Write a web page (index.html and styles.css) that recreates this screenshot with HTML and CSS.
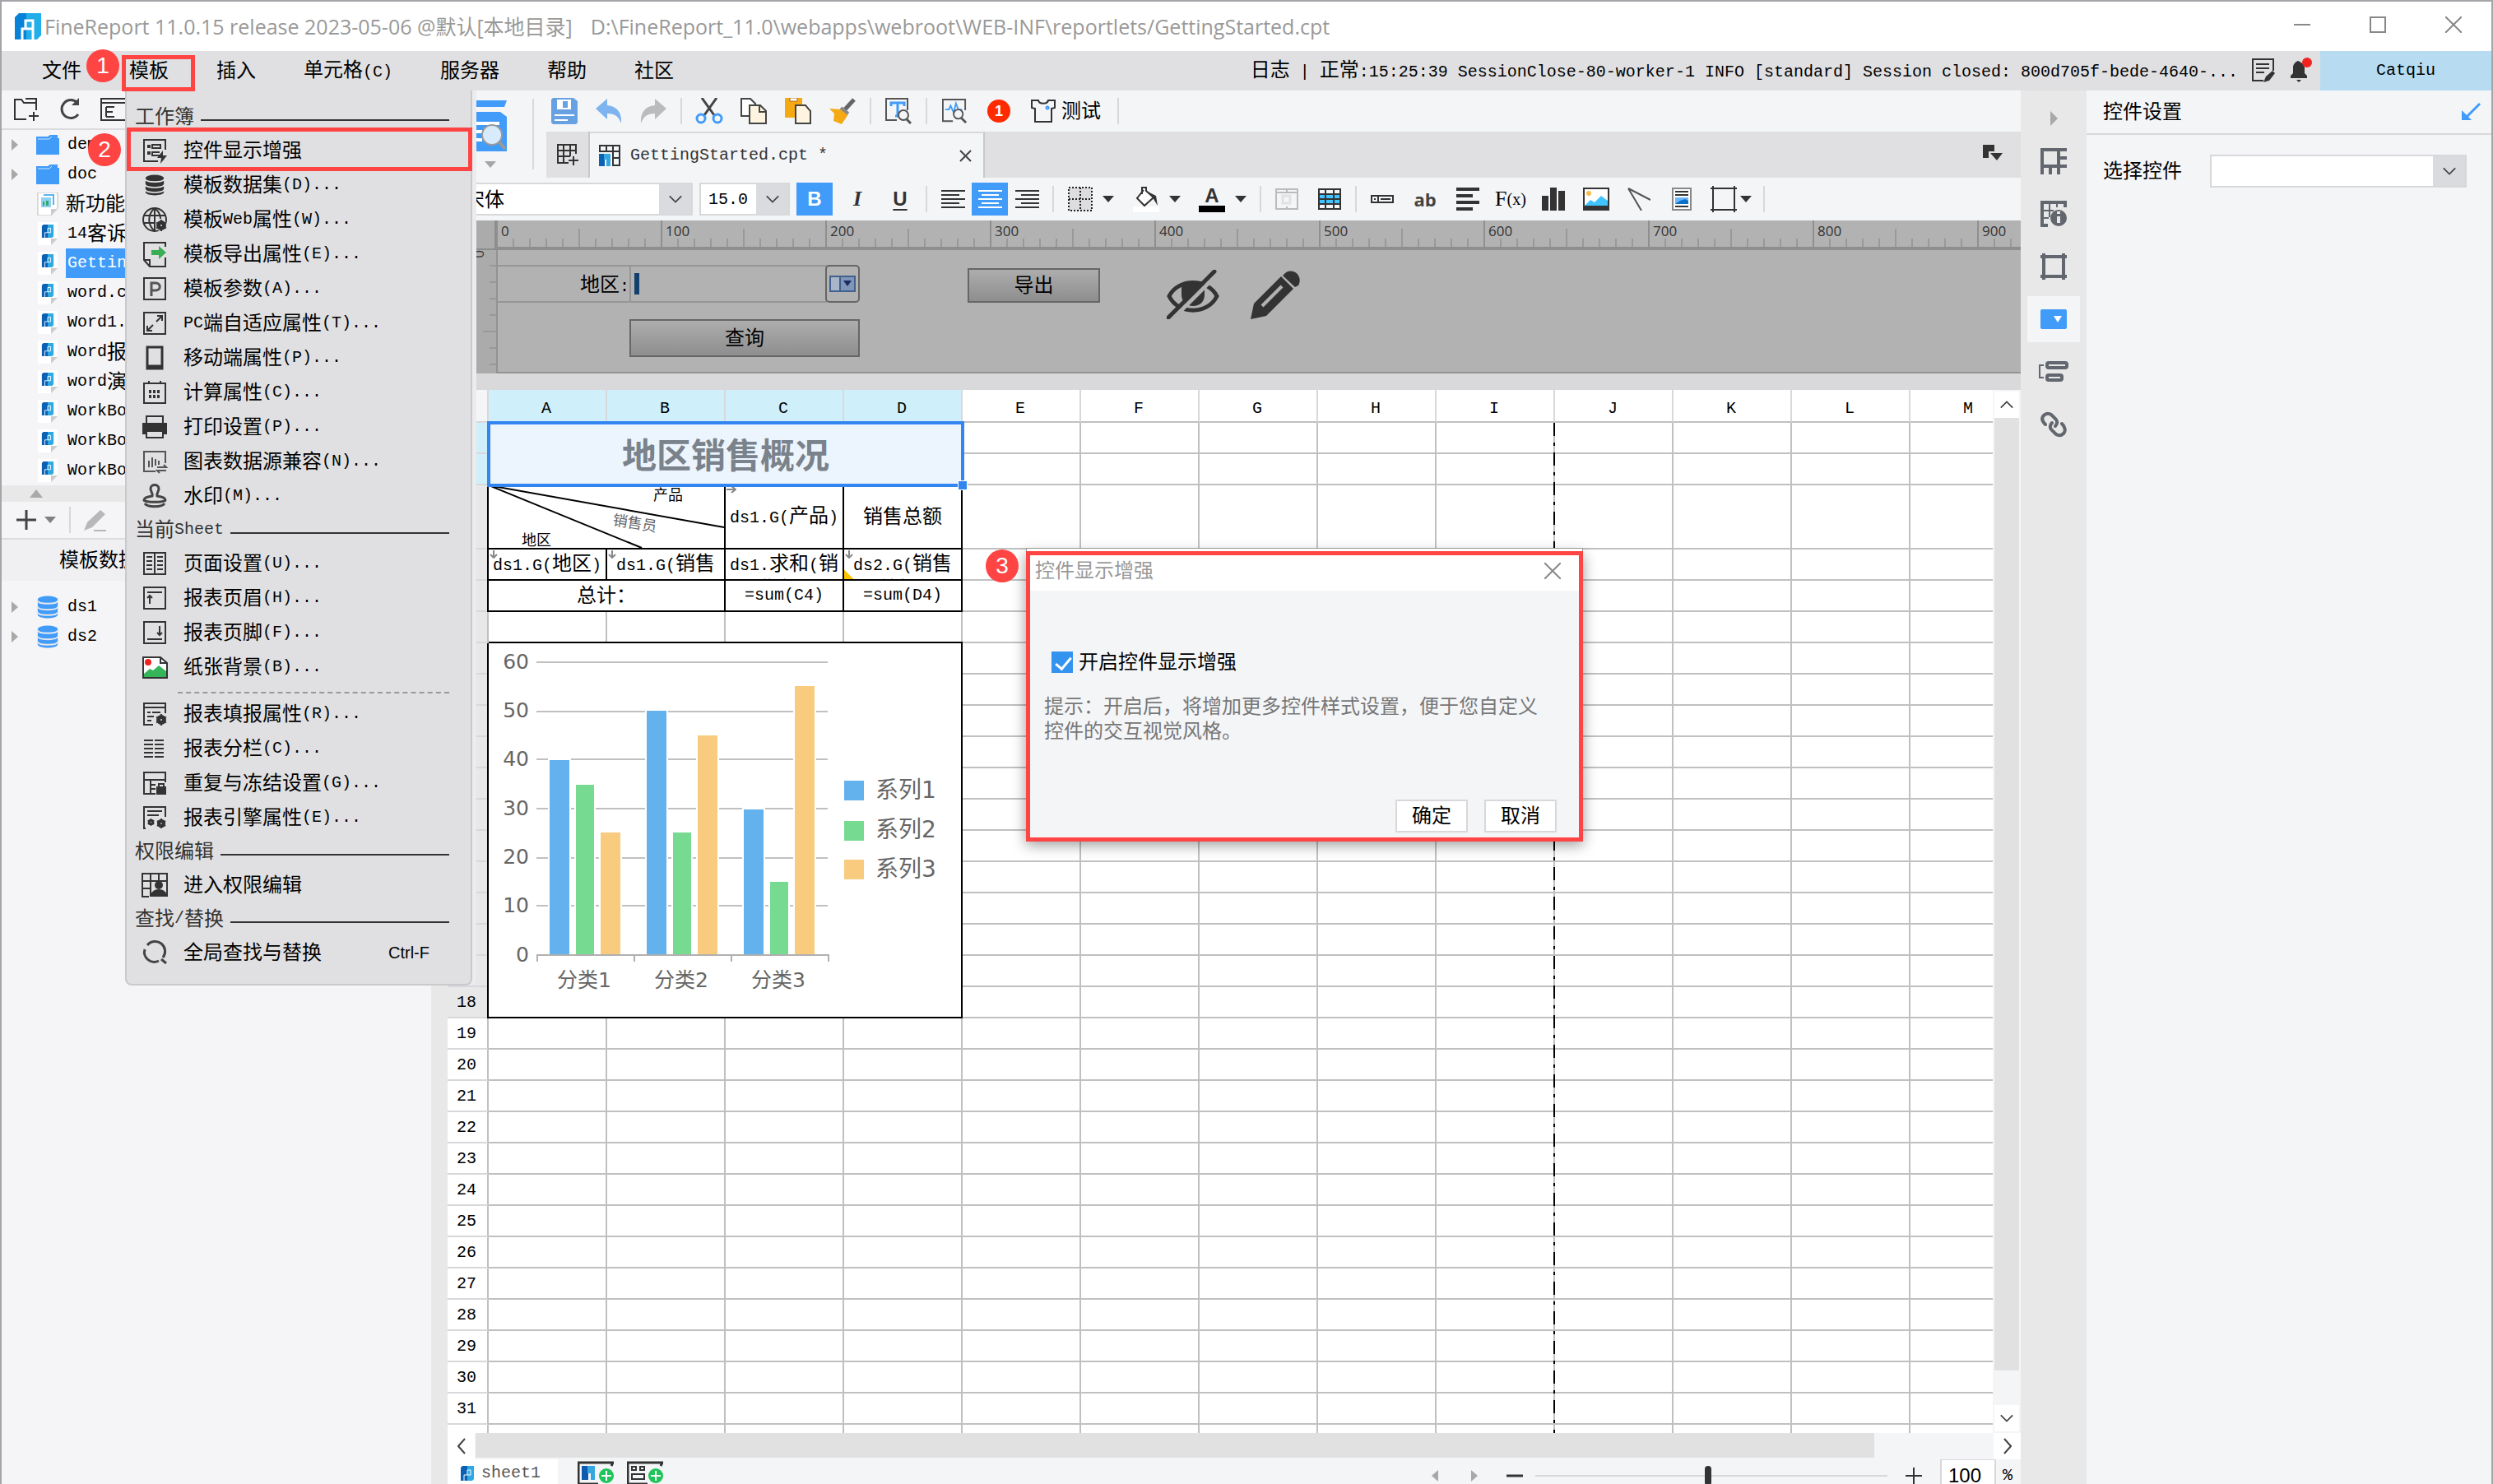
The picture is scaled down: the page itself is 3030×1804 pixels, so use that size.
FILE: index.html
```html
<!DOCTYPE html>
<html lang="zh-CN">
<head>
<meta charset="utf-8">
<title>FineReport 11.0.15</title>
<link rel="stylesheet" href="styles.css">
</head>
<body>
<svg class="sprite" aria-hidden="true">
  <symbol id="logo" viewBox="0 0 32 32"><path d="M5 0h15v32H0V5z" fill="#0782d8"/><path d="M14 0h18v27l-5 5H14z" fill="#22aee8"/><path d="M9 32V19h13V9h-9v10M22 19v13" fill="none" stroke="#fff" stroke-width="3"/></symbol>
  <symbol id="logo2" viewBox="0 0 16 18"><path d="M2 0h7v18H0V2z" fill="#0b62b5"/><path d="M8 0h8v16l-2 2H8z" fill="#2fa9e4"/><path d="M4 18v-7h8V5H8v6" fill="none" stroke="#fff" stroke-width="1"/></symbol>
  <symbol id="chev" viewBox="0 0 20 12"><path d="M2 2l8 8 8-8" fill="none" stroke="#444" stroke-width="2"/></symbol>
  <symbol id="caret" viewBox="0 0 14 8"><path d="M0 0h14L7 8z" fill="#333"/></symbol>
  <symbol id="tri" viewBox="0 0 8 14"><path d="M0 0l8 7-8 7z" fill="#a8a8a8"/></symbol>
  <symbol id="folder" viewBox="0 0 28 24"><path d="M0 2h14l3-2h9v4h2v20H0z" fill="#419bf9"/><path d="M2 5h14l3-3" stroke="#cfe5fd" fill="none"/></symbol>
  <symbol id="page" viewBox="0 0 24 28"><path d="M0 0h24v19l-8 9H0z" fill="#fff"/><path d="M16 28v-8h8z" fill="#ccc"/><use href="#logo2" x="4" y="3" width="16" height="16"/></symbol>
  <symbol id="db" viewBox="0 0 28 30"><path d="M1 5v20c0 6 26 6 26 0V5z"/><ellipse cx="14" cy="5" rx="13" ry="4.500"/><path d="M0 6c2 6 26 6 28 0M0 14c2 6 26 6 28 0M0 21c2 6 26 6 28 0" fill="none" stroke="#e8e8ec" stroke-width="2"/></symbol>
  <symbol id="gear" viewBox="0 0 14 14"><circle cx="7" cy="7" r="4" fill="none" stroke="#333" stroke-width="4"/><path d="M7 0v14M1 3.500l12 7M13 3.500l-12 7" stroke="#333" stroke-width="2"/><circle cx="7" cy="7" r="2" fill="#e0e0e2"/></symbol>
</svg>

<div class="window">
  <header class="titlebar">
    <svg class="i32"><use href="#logo"/></svg>
    <h1>FineReport 11.0.15 release 2023-05-06 @默认[本地目录]<span>D:\FineReport_11.0\webapps\webroot\WEB-INF\reportlets/GettingStarted.cpt</span></h1>
    <div class="winbtns">
      <button aria-label="最小化"><svg viewBox="0 0 20 20"><path d="M0 10h20"/></svg></button>
      <button aria-label="最大化"><svg viewBox="0 0 20 20"><path d="M1 1h18v18H1z"/></svg></button>
      <button aria-label="关闭"><svg viewBox="0 0 20 20"><path d="M0 0l20 20M20 0L0 20"/></svg></button>
    </div>
  </header>

  <nav class="menubar">
    <div class="menus">
      <button>文件</button><button>模板</button><button>插入</button><button>单元格<span class="m">(C)</span></button><button>服务器</button><button>帮助</button><button>社区</button>
    </div>
    <p class="log">日志<span class="m"> | </span>正常<span class="m">:15:25:39 SessionClose-80-worker-1 INFO [standard] Session closed: 800d705f-bede-4640-...</span></p>
    <button class="tool" aria-label="日志"><svg width="28" height="30" viewBox="0 0 28 30" fill="none" stroke="#333" stroke-width="2"><path d="M14 27H1V1h25v14M5 7h16M5 12h16M5 17h10"/><path d="M14 29l3-7 8-7 3 3-7 9z" fill="#333" stroke="none"/></svg></button>
    <button class="tool" aria-label="消息"><svg width="28" height="32" viewBox="0 0 28 32"><path d="M1 25v-3l3-3v-7c0-4 3-7 6-8 3 1 8 4 8 8v7l3 3v3zM8 27h6l-3 3z" fill="#333"/><circle cx="21" cy="6" r="6" fill="#f0231f"/></svg></button>
    <button class="user m">Catqiu</button>
  </nav>

  <main class="main">
    <aside class="left">
      <div class="ltools">
        <svg width="31" height="28" viewBox="0 0 31 28" fill="none" stroke="#333" stroke-width="2"><path d="M15 26H1V2h8l3 4h15v9M14 1h13v5M24 17v11M18 22h12"/></svg>
        <svg width="26" height="28" viewBox="0 0 26 28" fill="none" stroke="#444" stroke-width="3"><path d="M22 6A11 11 0 1 0 23 20"/><path d="M24 0v9h-9z" fill="#444" stroke="none"/></svg>
        <svg width="32" height="28" viewBox="0 0 32 28" fill="none" stroke="#333" stroke-width="2"><path d="M1 1h30v26H1zM1 6h30M7 11v12M7 11h10M7 17h8M7 23h10"/></svg>
      </div>
      <ul class="tree files">
        <li><svg class="arr"><use href="#tri"/></svg><svg class="ic"><use href="#folder"/></svg><span class="m">demo</span></li>
        <li><svg class="arr"><use href="#tri"/></svg><svg class="ic"><use href="#folder"/></svg><span class="m">doc</span></li>
        <li><i class="arr"></i><svg class="ic" viewBox="0 0 24 28"><path d="M0 0h24v19l-8 9H0z" fill="#fff" stroke="#bbb"/><path d="M7 3h12v12" stroke="#58b3ee" fill="none" stroke-width="2"/><path d="M4 6h12v12H4z" fill="#8fd0f5"/><path d="M6 16v-5h2v5zM10 16v-6h3v6z" fill="#35a867"/><path d="M16 28v-8h8z" fill="#ccc"/></svg>新功能</li>
        <li><i class="arr"></i><svg class="ic"><use href="#page"/></svg><span class="m">14</span>客诉</li>
        <li><i class="arr"></i><svg class="ic"><use href="#page"/></svg><span class="m sel">Getting</span></li>
        <li><i class="arr"></i><svg class="ic"><use href="#page"/></svg><span class="m">word.c</span></li>
        <li><i class="arr"></i><svg class="ic"><use href="#page"/></svg><span class="m">Word1.</span></li>
        <li><i class="arr"></i><svg class="ic"><use href="#page"/></svg><span class="m">Word</span>报</li>
        <li><i class="arr"></i><svg class="ic"><use href="#page"/></svg><span class="m">word</span>演</li>
        <li><i class="arr"></i><svg class="ic"><use href="#page"/></svg><span class="m">WorkBo</span></li>
        <li><i class="arr"></i><svg class="ic"><use href="#page"/></svg><span class="m">WorkBo</span></li>
        <li><i class="arr"></i><svg class="ic"><use href="#page"/></svg><span class="m">WorkBo</span></li>
      </ul>
      <div class="split"><svg width="16" height="10" viewBox="0 0 16 10"><path d="M8 0l8 10H0z" fill="#aaa"/></svg></div>
      <div class="dtools">
        <svg width="24" height="24" viewBox="0 0 24 24"><path d="M12 0v24M0 12h24" stroke="#444" stroke-width="3"/></svg>
        <svg width="14" height="8" class="half"><use href="#caret"/></svg>
        <i class="sep"></i>
        <svg width="28" height="28" viewBox="0 0 28 28"><path d="M0 27l4-10L20 2l6 5L10 23z" fill="#b8b8ba"/><path d="M12 27h15" stroke="#b8b8ba" stroke-width="2"/></svg>
      </div>
      <h2 class="dshead">模板数据</h2>
      <ul class="tree data">
        <li><svg class="arr"><use href="#tri"/></svg><svg class="ic" fill="#419bf9"><use href="#db"/></svg><span class="m">ds1</span></li>
        <li><svg class="arr"><use href="#tri"/></svg><svg class="ic" fill="#419bf9"><use href="#db"/></svg><span class="m">ds2</span></li>
      </ul>
    </aside>

    <section class="center">
      <div class="top">
        <button class="preview" aria-label="预览">
          <svg width="40" height="62" viewBox="0 0 40 62"><path d="M0 0h40l-3 8H0zM0 14h32l8 6v42H0z" fill="#419bf9"/><path d="M0 28h31M0 38h10M0 48h10" stroke="#fff" stroke-width="4"/><path d="M30 50l8 9" stroke="#999" stroke-width="4"/><circle cx="22" cy="42" r="12" fill="#d8ebfd" stroke="#999" stroke-width="2"/></svg>
          <svg width="14" height="8" class="dim"><use href="#caret"/></svg>
        </button>
        <i class="vsep"></i>
        <div class="tops">
          <div class="bar1">
            <button aria-label="保存"><svg width="32" height="32" viewBox="0 0 32 32"><path d="M2 0h25l5 4v26l-2 2H2l-2-2V2z" fill="#67a1e2"/><path d="M7 2h17v12H7z" fill="#fff"/><path d="M14 4h6v8h-6z" fill="#67a1e2"/><path d="M4 21h24M4 27h16" stroke="#fff" stroke-width="2"/></svg></button>
            <button aria-label="撤销"><svg width="32" height="32" viewBox="0 0 32 32"><path d="M0 13L14 1v8c12 1 18 9 17 22-3-8-7-12-17-12v7z" fill="#7db3ee"/></svg></button>
            <button aria-label="重做"><svg width="32" height="32" viewBox="0 0 32 32"><path d="M32 13L18 1v8C6 10 0 18 1 31c3-8 7-12 17-12v7z" fill="#bbb"/></svg></button>
            <i class="sep"></i>
            <button aria-label="剪切"><svg width="34" height="32" viewBox="0 0 34 32" fill="none"><path d="M8 0l15 21M26 0L11 21" stroke="#444" stroke-width="3"/><circle cx="7" cy="25" r="5" stroke="#419bf9" stroke-width="3"/><circle cx="27" cy="25" r="5" stroke="#419bf9" stroke-width="3"/></svg></button>
            <button aria-label="复制"><svg width="32" height="32" viewBox="0 0 32 32" fill="#fff" stroke="#444" stroke-width="2"><path d="M1 1h11l6 6v15H1z"/><path d="M11 9h13l7 7v15H11z" fill="#fef4df"/><path d="M23 9v8h8" fill="none"/></svg></button>
            <button aria-label="粘贴"><svg width="32" height="32" viewBox="0 0 32 32"><path d="M0 0h21v24H0z" fill="#f5a912"/><path d="M6 0h9v4H6z" fill="#fff" stroke="#b26a13"/><path d="M13 9h12l6 7v15H13z" fill="#fef4df" stroke="#444" stroke-width="2"/></svg></button>
            <button aria-label="格式刷"><svg width="32" height="32" viewBox="0 0 32 32"><path d="M30 2L19 14" stroke="#666" stroke-width="5"/><path d="M0 13l14 1 9 6-8 12-10-4 1-9z" fill="#f5a912"/><path d="M14 12l9 7" stroke="#888" stroke-width="4"/></svg></button>
            <i class="sep"></i>
            <button aria-label="查找"><svg width="32" height="32" viewBox="0 0 32 32" fill="none" stroke="#555" stroke-width="2"><path d="M14 27H1V1h26v14"/><path d="M7 10V6h16v4M15 6v16M12 22h6" stroke="#419bf9" stroke-width="3"/><circle cx="22" cy="21" r="6" fill="#f4f5f7"/><path d="M26 26l5 5" stroke-width="3"/></svg></button>
            <i class="sep"></i>
            <button aria-label="性能检测"><svg width="30" height="30" viewBox="0 0 32 32" fill="none" stroke="#555" stroke-width="2"><path d="M14 29H1V1h29v14"/><path d="M4 14h5l2-5 4 9 3-12 3 8h5" stroke="#419bf9"/><circle cx="21" cy="20" r="6" fill="#f4f5f7"/><path d="M25 25l6 6" stroke-width="3"/></svg></button>
            <button aria-label="提醒"><b class="alert">1</b></button>
            <button class="theme"><svg width="30" height="28" viewBox="0 0 30 28" fill="none" stroke="#333" stroke-width="2"><path d="M1 1h8c1 5 11 5 12 0h8v9l-4 1v16H5V11l-4-1z"/><circle cx="20" cy="10" r="1" stroke="#419bf9" stroke-width="3"/></svg>测试</button>
            <i class="sep"></i>
          </div>
          <div class="tabs">
            <button class="newtab" aria-label="新建"><svg width="26" height="26" viewBox="0 0 26 26" fill="none" stroke="#333" stroke-width="2"><path d="M14 23H1V1h22v11M1 8h22M1 15h15M8 1v22M16 1v14M20 15v11M14 20h12"/></svg></button>
            <div class="tab"><svg width="26" height="26" viewBox="0 0 26 26" fill="none" stroke="#333" stroke-width="2"><path d="M1 9V1h24v24h-9M1 8h24M17 16h8M9 1v7M17 1v24"/><path d="M0 11h7v15H0z" fill="#0b62b5" stroke="none"/><path d="M6 11h8v15H9v-8H6z" fill="#35a6e0" stroke="none"/></svg><span class="m">GettingStarted.cpt *</span><button aria-label="关闭标签"><svg width="15" height="15" viewBox="0 0 15 15"><path d="M1 1l13 13M14 1L1 14" stroke="#444" stroke-width="2"/></svg></button></div>
            <button class="more" aria-label="更多"><svg width="24" height="20" viewBox="0 0 24 20"><path d="M0 0h14v8H7v8H0z" fill="#333"/><path d="M9 10h15l-7 9z" fill="#333"/></svg></button>
          </div>
        </div>
      </div>

      <div class="bar2">
        <label class="combo font"><select aria-label="字体"><option>宋体</option></select><span><svg width="18" height="12"><use href="#chev"/></svg></span></label>
        <label class="combo size"><select class="m" aria-label="字号"><option>15.0</option></select><span><svg width="18" height="12"><use href="#chev"/></svg></span></label>
        <button class="on bold">B</button>
        <button class="ital">I</button>
        <button class="undl">U</button>
        <i class="sep"></i>
        <div class="group">
          <button aria-label="左对齐"><svg width="29" height="23" viewBox="0 0 29 23" stroke="#333" stroke-width="2"><path d="M0 1h29M0 6h22M0 11h29M0 16h22M0 21h29"/></svg></button><button class="on" aria-label="居中"><svg width="29" height="23" viewBox="0 0 29 23" stroke="#fff" stroke-width="2"><path d="M0 1h29M4 6h21M0 11h29M4 16h21M0 21h29"/></svg></button><button aria-label="右对齐"><svg width="29" height="23" viewBox="0 0 29 23" stroke="#333" stroke-width="2"><path d="M0 1h29M7 6h22M0 11h29M7 16h22M0 21h29"/></svg></button>
        </div>
        <i class="sep"></i>
        <button class="wide" aria-label="边框"><svg width="30" height="30" viewBox="0 0 30 30"><path d="M1 1h28v28H1z" fill="#dddde0" stroke="#222" stroke-width="2" stroke-dasharray="2 2"/><path d="M15 1v28M1 15h28" stroke="#222" stroke-width="2" stroke-dasharray="2 2"/></svg><svg width="14" height="8"><use href="#caret"/></svg></button>
        <button class="wide" aria-label="填充"><svg width="32" height="32" viewBox="0 0 32 32"><path d="M0 25h32v7H0z" fill="#fff"/><path d="M13 5L5 15l9 9 11-10-9-8V2h-5v8" fill="#fff" stroke="#333" stroke-width="2"/><path d="M18 7l10 5 2 12-5-8z" fill="#333"/></svg><svg width="14" height="8"><use href="#caret"/></svg></button>
        <button class="wide fc" aria-label="字体颜色"><b>A</b><svg width="14" height="8"><use href="#caret"/></svg></button>
        <i class="sep"></i>
        <button aria-label="合并"><svg width="28" height="26" viewBox="0 0 28 26" fill="none" stroke="#bbb" stroke-width="2"><path d="M1 1h26v24H1zM1 5h26M14 1v4M14 22v3" /><path d="M9 9h9v9H9z" stroke="#e2e2e4" stroke-width="3"/></svg></button>
        <button aria-label="网格"><svg width="28" height="26" viewBox="0 0 28 26"><path d="M1 8h26v11H1z" fill="#40c4ff"/><path d="M1 1h26v24H1zM1 7h26M1 13h26M1 19h26M9 1v24M19 1v24" fill="none" stroke="#333" stroke-width="2"/></svg></button>
        <i class="sep"></i>
        <button aria-label="控件"><svg width="28" height="10" viewBox="0 0 28 10" fill="none" stroke="#333" stroke-width="2"><path d="M1 1h26v8H1zM9 1v8M12 5h12M4 5h2"/></svg></button>
        <button class="ab">ab</button>
        <button aria-label="富文本"><svg width="28" height="28" viewBox="0 0 28 28" stroke="#333" stroke-width="4"><path d="M0 2h28M0 10h20M0 18h28M0 26h20"/></svg></button>
        <button class="fx">F<small>(x)</small></button>
        <button aria-label="图表"><svg width="28" height="28" viewBox="0 0 28 28" fill="#333"><path d="M0 10h8v18H0zM10 0h8v28h-8zM20 4h8v24h-8z"/></svg></button>
        <button aria-label="图片"><svg width="32" height="28" viewBox="0 0 32 28"><path d="M1 1h30v26H1z" fill="#fff" stroke="#333" stroke-width="2"/><path d="M2 22l7-7 5 3 8-8 8 6v6z" fill="#40c4ff"/><path d="M1 22h30v5H1z" fill="#333"/><circle cx="7" cy="7" r="3" fill="#f9bd4d"/></svg></button>
        <button aria-label="斜线"><svg width="28" height="28" viewBox="0 0 28 28" stroke="#555" stroke-width="2"><path d="M1 1l16 27M1 1l27 14"/></svg></button>
        <button aria-label="子报表"><svg width="24" height="28" viewBox="0 0 24 28"><path d="M1 1h22v26H1z" fill="#fff" stroke="#888" stroke-width="2"/><path d="M4 5h16M4 9h16M4 23h16" stroke="#333" stroke-width="2"/><path d="M4 12h16v8H4z" fill="#6cb5ff"/><path d="M4 20l6-4 6-2 4 2v4z" fill="#0a70c8"/></svg></button>
        <button class="float" aria-label="悬浮元素"><svg width="32" height="32" viewBox="0 0 32 32" fill="none" stroke="#333" stroke-width="2"><path d="M0 3h32M0 29h32M3 0v32M29 0v32"/></svg><svg width="14" height="8"><use href="#caret"/></svg></button>
        <i class="sep"></i>
      </div>

      <div class="parampane">
        <div class="corner"></div>
        <div class="hruler"><span>0</span><span>100</span><span>200</span><span>300</span><span>400</span><span>500</span><span>600</span><span>700</span><span>800</span><span>900</span></div>
        <div class="vruler"><span>0</span></div>
        <form class="canvas">
          <label class="w area" for="area">地区<span class="m">:</span></label>
          <input class="w areabox" id="area">
          <button type="button" class="w drop" aria-label="下拉"><svg width="32" height="20" viewBox="0 0 32 20"><path d="M1 1h30v18H1z" fill="#a9b6c9" stroke="#41618f" stroke-width="2"/><path d="M13 2h17v16H13z" fill="#7f96b8"/><path d="M13 1v18" stroke="#41618f" stroke-width="2"/><path d="M17 6h10l-5 7z" fill="#1d2b62"/></svg></button>
          <button type="button" class="w query">查询</button>
          <button type="button" class="w export">导出</button>
          <svg class="w eye" viewBox="0 0 64 60"><path d="M3 32C14 10 50 10 61 32 50 55 14 55 3 32z" fill="none" stroke="#333" stroke-width="5"/><path d="M18 22c0-4 6-8 14-8s14 4 14 8v8c0 9-6 14-14 14s-14-5-14-14z" fill="#333"/><path d="M7 60L64 3" stroke="#b2b2b2" stroke-width="5"/><path d="M2 58L58 2" stroke="#333" stroke-width="5" stroke-linecap="round"/></svg>
          <svg class="w pencil" viewBox="0 0 60 60"><path d="M0 60l4-19L37 8l15 15-33 33z" fill="#333"/><path d="M14 44l24-24" stroke="#b2b2b2" stroke-width="4"/><path d="M41 5c8-9 24 1 17 14l-4 2L39 7z" fill="#333"/></svg>
        </form>
      </div>

      <div class="sheetarea">
        <div class="sheet">
          <table>
            <colgroup><col class="rh"><col><col><col><col><col><col><col><col><col><col><col><col><col></colgroup>
            <thead><tr><td class="cn"></td><th class="cy">A</th><th class="cy">B</th><th class="cy">C</th><th class="cy">D</th><th>E</th><th>F</th><th>G</th><th>H</th><th>I</th><th>J</th><th>K</th><th>L</th><th>M</th></tr></thead>
            <tbody>
              <tr><th class="cy">1</th><td colspan="4" rowspan="2" class="selcell">地区销售概况<i></i></td><td colspan="9" class="g"></td></tr>
              <tr><th class="cy">2</th><td colspan="9" class="g"></td></tr>
              <tr class="tall"><th class="gr">3</th><td colspan="2" class="k first"><svg class="diag" width="286" height="76" viewBox="0 0 286 76"><path d="M0 0l286 51M0 0l186 76" stroke="#000" stroke-width="2"/><text x="200" y="18">产品</text><text x="150" y="48" class="mid" transform="rotate(9 150 48)">销售员</text><text x="40" y="73">地区</text></svg></td><td class="k"><svg class="mark" viewBox="0 0 12 10"><path d="M0 4h10M6 0l5 4-5 4" fill="none" stroke="#888" stroke-width="2"/></svg><span class="m">ds1.G(</span>产品<span class="m">)</span></td><td class="k">销售总额</td><td colspan="9" class="g"></td></tr>
              <tr><th class="gr">4</th><td class="k first"><div class="clip"><svg class="mark" viewBox="0 0 12 10"><path d="M5 0v9M1 5l4 4 4-4" fill="none" stroke="#888" stroke-width="2"/></svg><span class="m">ds1.G(</span>地区<span class="m">)</span></div></td><td class="k"><div class="clip"><svg class="mark" viewBox="0 0 12 10"><path d="M5 0v9M1 5l4 4 4-4" fill="none" stroke="#888" stroke-width="2"/></svg><span class="m">ds1.G(</span>销售员<span class="m">)</span></div></td><td class="k"><div class="clip"><span class="m">ds1.</span>求和<span class="m">(</span>销售额<span class="m">)</span></div></td><td class="k"><div class="clip flag"><svg class="mark" viewBox="0 0 12 10"><path d="M5 0v9M1 5l4 4 4-4" fill="none" stroke="#888" stroke-width="2"/></svg><span class="m">ds2.G(</span>销售总额<span class="m">)</span></div></td><td colspan="9" class="g"></td></tr>
              <tr><th class="gr">5</th><td colspan="2" class="k first">总计：</td><td class="k m">=sum(C4)</td><td class="k m">=sum(D4)</td><td colspan="9" class="g"></td></tr>
              <tr><th class="gr">6</th><td colspan="4" class="g kb"></td><td colspan="9" class="g"></td></tr>
              <tr><th class="gr">7</th><td colspan="4" rowspan="12" class="k first chart">
                <svg width="574" height="454" viewBox="594 782 574 454">
                  <path d="M652 805h354M652 865h354M652 923h354M652 983h354M652 1043h354M652 1101h354" stroke="#c0c0c0" stroke-width="2"/>
                  <path d="M653 1169v-8h354v8M771 1161v8M889 1161v8" fill="none" stroke="#b0b0b0" stroke-width="2"/>
                  <g stroke="#fff" stroke-width="4" paint-order="stroke">
                    <path d="M668 924h24v236h-24zM786 864h24v296h-24zM904 984h24v176h-24z" fill="#63b2ee"/>
                    <path d="M700 954h22v206h-22zM818 1012h22v148h-22zM936 1072h22v88h-22z" fill="#76da91"/>
                    <path d="M730 1012h24v148h-24zM848 894h24v266h-24zM966 834h24v326h-24z" fill="#f8cb7f"/>
                  </g>
                  <path d="M652 1161h355" stroke="#b0b0b0" stroke-width="2"/>
                  <g class="ax" text-anchor="end"><text x="643" y="813">60</text><text x="643" y="872">50</text><text x="643" y="931">40</text><text x="643" y="991">30</text><text x="643" y="1050">20</text><text x="643" y="1109">10</text><text x="643" y="1169">0</text></g>
                  <g class="ax" text-anchor="middle"><text x="710" y="1200">分类1</text><text x="828" y="1200">分类2</text><text x="946" y="1200">分类3</text></g>
                  <path d="M1026 949h24v24h-24z" fill="#63b2ee"/><path d="M1026 998h24v24h-24z" fill="#76da91"/><path d="M1026 1045h24v24h-24z" fill="#f8cb7f"/>
                  <g class="lg"><text x="1064" y="970">系列1</text><text x="1064" y="1018">系列2</text><text x="1064" y="1066">系列3</text></g>
                </svg></td><td colspan="9" class="g"></td></tr>
              <tr><th class="gr">8</th><td colspan="9" class="g"></td></tr>
              <tr><th class="gr">9</th><td colspan="9" class="g"></td></tr>
              <tr><th class="gr">10</th><td colspan="9" class="g"></td></tr>
              <tr><th class="gr">11</th><td colspan="9" class="g"></td></tr>
              <tr><th class="gr">12</th><td colspan="9" class="g"></td></tr>
              <tr><th class="gr">13</th><td colspan="9" class="g"></td></tr>
              <tr><th class="gr">14</th><td colspan="9" class="g"></td></tr>
              <tr><th class="gr">15</th><td colspan="9" class="g"></td></tr>
              <tr><th class="gr">16</th><td colspan="9" class="g"></td></tr>
              <tr><th class="gr">17</th><td colspan="9" class="g"></td></tr>
              <tr><th class="gr">18</th><td colspan="9" class="g"></td></tr>
              <tr><th>19</th><td colspan="13" class="g"></td></tr>
              <tr><th>20</th><td colspan="13" class="g"></td></tr>
              <tr><th>21</th><td colspan="13" class="g"></td></tr>
              <tr><th>22</th><td colspan="13" class="g"></td></tr>
              <tr><th>23</th><td colspan="13" class="g"></td></tr>
              <tr><th>24</th><td colspan="13" class="g"></td></tr>
              <tr><th>25</th><td colspan="13" class="g"></td></tr>
              <tr><th>26</th><td colspan="13" class="g"></td></tr>
              <tr><th>27</th><td colspan="13" class="g"></td></tr>
              <tr><th>28</th><td colspan="13" class="g"></td></tr>
              <tr><th>29</th><td colspan="13" class="g"></td></tr>
              <tr><th>30</th><td colspan="13" class="g"></td></tr>
              <tr><th>31</th><td colspan="13" class="g"></td></tr>
              <tr><th></th><td colspan="13" class="g"></td></tr>
            </tbody>
          </table>
          <div class="pagebreak"></div>
        </div>
        <div class="vscroll">
          <button aria-label="上"><svg class="flip" width="18" height="12"><use href="#chev"/></svg></button>
          <div class="thumb"></div>
          <button aria-label="下"><svg width="18" height="12"><use href="#chev"/></svg></button>
        </div>
      </div>
      <div class="hscroll">
        <button aria-label="左"><svg width="10" height="20" viewBox="0 0 10 20"><path d="M9 1L1 10l8 9" fill="none" stroke="#444" stroke-width="2"/></svg></button>
        <div class="thumb"></div>
        <button aria-label="右"><svg width="10" height="20" viewBox="0 0 10 20"><path d="M1 1l8 9-8 9" fill="none" stroke="#444" stroke-width="2"/></svg></button>
      </div>
      <footer class="sheetbar">
        <button class="stab m"><svg width="16" height="18"><use href="#logo2"/></svg>sheet1</button>
        <button class="add" aria-label="新建工作表"><svg width="44" height="30" viewBox="0 0 44 30"><path d="M41 8l2-4H1v26h24" fill="none" stroke="#333" stroke-width="3"/><path d="M5 8h8v17H5z" fill="#0b5cb0"/><path d="M12 8h9v17h-5v-8h-4z" fill="#35a6e0"/><circle cx="35" cy="20" r="9" fill="#1fc45a"/><path d="M29 20h12M35 14v12" stroke="#fff" stroke-width="2"/></svg></button>
        <button class="add" aria-label="新建聚合报表"><svg width="44" height="30" viewBox="0 0 44 30"><path d="M41 8l2-4H1v26h24" fill="none" stroke="#333" stroke-width="3"/><path d="M6 9h5v4H6zM16 9h5v4h-5zM6 18h15v6H6z" fill="none" stroke="#333" stroke-width="2"/><circle cx="35" cy="20" r="9" fill="#1fc45a"/><path d="M29 20h12M35 14v12" stroke="#fff" stroke-width="2"/></svg></button>
        <div class="zoom">
          <button aria-label="上一页"><svg class="flop" width="8" height="14"><use href="#tri"/></svg></button>
          <button aria-label="下一页"><svg width="8" height="14"><use href="#tri"/></svg></button>
          <button class="minus" aria-label="缩小"><svg width="20" height="20" viewBox="0 0 20 20"><path d="M0 10h20" stroke="#333" stroke-width="3"/></svg></button>
          <input type="range" aria-label="缩放" min="0" max="100" value="49">
          <button class="plus" aria-label="放大"><svg width="20" height="20" viewBox="0 0 20 20"><path d="M0 10h20M10 0v20" stroke="#333" stroke-width="2"/></svg></button>
          <input class="pct" aria-label="缩放比例" value="100"><span class="m">%</span>
        </div>
      </footer>
    </section>

    <nav class="rail">
      <button aria-label="收起"><svg width="9" height="18" viewBox="0 0 8 14" preserveAspectRatio="none"><path d="M0 0l8 7-8 7z" fill="#a8a8a8"/></svg></button>
      <button aria-label="单元格元素"><svg width="32" height="32" viewBox="0 0 32 32" fill="none" stroke="#62666f" stroke-width="4"><path d="M2 32V2h30M22 2v20H2M22 12h10M22 22h10M12 22v10M22 22v10"/></svg></button>
      <button aria-label="单元格属性"><svg width="32" height="32" viewBox="0 0 32 32" fill="none" stroke="#62666f"><path d="M9 30H2V2h28v6" stroke-width="4"/><path d="M2 12h14M11 2v18M20 2v6M2 21h8" stroke-width="2"/><circle cx="22" cy="21" r="10" fill="#62666f" stroke="none"/><path d="M22 13v3M22 19v8" stroke="#e8e8e8" stroke-width="4"/></svg></button>
      <button aria-label="悬浮元素"><svg width="32" height="32" viewBox="0 0 32 32" fill="none" stroke="#62666f" stroke-width="4"><path d="M0 4h32M0 28h32M4 0v32M28 0v32"/></svg></button>
      <button class="cur" aria-label="控件设置"><svg width="32" height="24" viewBox="0 0 32 24"><rect width="32" height="24" rx="2" fill="#419bf9"/><path d="M16 8h10l-5 8z" fill="#fff"/></svg></button>
      <button aria-label="条件属性"><svg width="36" height="26" viewBox="0 0 36 26" fill="none" stroke="#62666f"><path d="M6 5H1v15h5" stroke-width="2"/><rect x="10" y="2" width="24" height="6" rx="2" stroke-width="4"/><rect x="10" y="17" width="18" height="6" rx="2" stroke-width="4"/></svg></button>
      <button aria-label="超级链接"><svg width="32" height="32" viewBox="0 0 32 32" fill="none" stroke="#62666f" stroke-width="4" stroke-linecap="round"><path d="M6 16c-4-4-5-8-2-11s8-3 11 1l4 4c2 3 1 6-1 8M26 15c4 4 5 9 2 12s-8 3-11-1l-4-4c-2-3-1-6 1-8"/></svg></button>
    </nav>

    <aside class="right">
      <header><h2>控件设置</h2><svg width="24" height="24" viewBox="0 0 24 24"><path d="M22 2L5 19" stroke="#419bf9" stroke-width="3"/><path d="M0 10l12 12H0z" fill="#419bf9"/></svg></header>
      <div class="pick"><span id="pk">选择控件</span><label class="combo"><select aria-labelledby="pk"><option></option></select><span><svg width="18" height="12"><use href="#chev"/></svg></span></label></div>
    </aside>
  </main>
</div>

<div class="popup" role="menu">
  <h3>工作簿</h3>
  <button><svg viewBox="0 0 32 32"><path d="M20 29H3V3h26v12" fill="none" stroke="#333" stroke-width="2"/><path d="M13 9h10v4H13zM22 22h-9v-4h9" fill="none" stroke="#333" stroke-width="2"/><path d="M7 9h4v4H7zM7 17h4v4H7z" fill="#333"/><path d="M26 16l-7 9h5l-1 7 8-10h-5z" fill="#333"/></svg>控件显示增强</button>
  <button><svg viewBox="0 0 32 32" fill="#333"><use href="#db" x="4" y="2" width="24" height="28"/></svg>模板数据集<span class="m">(D)...</span></button>
  <button><svg viewBox="0 0 32 32" fill="none" stroke="#333" stroke-width="2"><circle cx="16" cy="16" r="14"/><path d="M16 2c-9 8-9 20 0 28M16 2c5 4 7 8 7 13M16 2v28M3 11h26M3 20h14"/><circle cx="24" cy="23" r="7" fill="#e0e0e2" stroke="none"/><use href="#gear" x="17" y="16" width="14" height="14"/></svg>模板<span class="m">Web</span>属性<span class="m">(W)...</span></button>
  <button><svg viewBox="0 0 32 32" fill="none" stroke="#333" stroke-width="2"><path d="M29 7V2H3v21l7 8h19V20M3 23h7v8"/><path d="M12 11h9V6l9 8-9 8v-5h-9z" fill="#3bae55" stroke="none"/></svg>模板导出属性<span class="m">(E)...</span></button>
  <button><svg viewBox="0 0 32 32" fill="none" stroke="#333" stroke-width="2"><path d="M3 3h26v26H3z"/><path d="M12 25V9h5c7 0 7 9 0 9h-5" stroke="#555" stroke-width="3"/></svg>模板参数<span class="m">(A)...</span></button>
  <button><svg viewBox="0 0 32 32" fill="none" stroke="#333" stroke-width="2"><path d="M3 3h26v26H3zM18 14l7-7M19 7h6v6M14 18l-7 7M7 19v6h6"/></svg><span class="m">PC</span>端自适应属性<span class="m">(T)...</span></button>
  <button><svg viewBox="0 0 32 32" fill="none" stroke="#333" stroke-width="3"><path d="M7 3h18v26H7zM7 26h18"/></svg>移动端属性<span class="m">(P)...</span></button>
  <button><svg viewBox="0 0 32 32" fill="none" stroke="#333" stroke-width="2"><path d="M3 5h26v24H3zM9 2v4M23 2v4"/><path d="M9 15h14M9 21h14" stroke-width="4" stroke-dasharray="3 2"/></svg>计算属性<span class="m">(C)...</span></button>
  <button><svg viewBox="0 0 32 32" fill="none" stroke="#333" stroke-width="2"><path d="M6 12V3h20v9M6 22v7h20v-7"/><path d="M2 12h28v12h-3v-3H5v3H2z" fill="#333"/></svg>打印设置<span class="m">(P)...</span></button>
  <button><svg viewBox="0 0 32 32" fill="none" stroke="#555" stroke-width="2"><path d="M17 28H3V4h26v14M9 15v8M13 11v12M17 13v8M21 15v5M19 23h11l-3-3M30 27H19l3 3"/></svg>图表数据源兼容<span class="m">(N)...</span></button>
  <button><svg viewBox="0 0 32 32" fill="none" stroke="#444" stroke-width="3"><path d="M13 16c1-4-2-5-2-9 0-6 10-6 10 0 0 4-3 5-2 9 8 1 10 3 10 5 0 3-26 3-26 0 0-2 2-4 10-5zM4 25c3 5 21 5 24 0"/></svg>水印<span class="m">(M)...</span></button>
  <h3>当前<span class="m">Sheet</span></h3>
  <button><svg viewBox="0 0 32 32" fill="none" stroke="#333" stroke-width="2"><path d="M3 3h26v26H3zM16 3v26M6 8h7M6 13h7M6 18h7M6 23h7M19 8h7M19 13h7M19 18h7M19 23h7"/></svg>页面设置<span class="m">(U)...</span></button>
  <button><svg viewBox="0 0 32 32" fill="none" stroke="#333" stroke-width="2"><path d="M3 3h26v26H3zM7 9h18M10 13v10M7 16l3-3 3 3"/></svg>报表页眉<span class="m">(H)...</span></button>
  <button><svg viewBox="0 0 32 32" fill="none" stroke="#333" stroke-width="2"><path d="M3 3h26v26H3zM7 24h18M22 8v10M19 16l3 3 3-3"/></svg>报表页脚<span class="m">(F)...</span></button>
  <button><svg viewBox="0 0 32 32"><path d="M2 4h21l8 7v18H2z" fill="#fff" stroke="#333" stroke-width="2"/><path d="M3 28v-4l7-6 4 2 7-6 9 7v7z" fill="#34b658"/><circle cx="8" cy="10" r="4" fill="#f0231f"/><path d="M23 4v7h8" fill="none" stroke="#333" stroke-width="2"/></svg>纸张背景<span class="m">(B)...</span></button>
  <hr>
  <button><svg viewBox="0 0 32 32" fill="none" stroke="#333" stroke-width="2"><path d="M14 29H3V3h26v12M3 8h26M7 14h4M13 14h10M7 19h8M7 24h5"/><use href="#gear" x="17" y="16" width="14" height="14"/></svg>报表填报属性<span class="m">(R)...</span></button>
  <button><svg viewBox="0 0 32 32" stroke="#333" stroke-width="2"><path d="M3 6h11M3 11h11M3 16h11M3 21h11M3 26h11M16 6h11M16 11h11M16 16h11M16 21h11M16 26h11"/></svg>报表分栏<span class="m">(C)...</span></button>
  <button><svg viewBox="0 0 32 32" fill="none" stroke="#333" stroke-width="2"><path d="M17 29H3V3h26v12M3 12h26M11 12v17M11 18h6M11 23h6"/><path d="M18 20h12v10H18z" fill="#333" stroke="none"/><path d="M21 21v-4h6v4"/></svg>重复与冻结设置<span class="m">(G)...</span></button>
  <button><svg viewBox="0 0 32 32" fill="none" stroke="#333" stroke-width="2"><path d="M5 29H3V3h26v12M7 8h18M7 13h14"/><use href="#gear" x="7" y="17" width="9" height="9"/><use href="#gear" x="18" y="17" width="12" height="12"/></svg>报表引擎属性<span class="m">(E)...</span></button>
  <h3>权限编辑</h3>
  <button><svg viewBox="0 0 32 32" fill="none" stroke="#333" stroke-width="2"><path d="M9 30H1V2h30v28M1 11h30M1 20h10M11 2v28M21 2v9"/><circle cx="21" cy="16" r="5" fill="#333" stroke="none"/><path d="M11 30c0-12 20-12 20 0z" fill="#333" stroke="none"/></svg>进入权限编辑</button>
  <h3>查找<span class="m">/</span>替换</h3>
  <button><svg viewBox="0 0 32 32" fill="none" stroke="#444" stroke-width="3"><path d="M7 7a12 12 0 0 1 19 15M21 26A12 12 0 0 1 4 12M24 24l6 5"/></svg>全局查找与替换<kbd>Ctrl-F</kbd></button>
</div>

<section class="dialog" role="dialog" aria-labelledby="dt">
  <header><h2 id="dt">控件显示增强</h2><button class="x" aria-label="关闭"><svg width="20" height="20" viewBox="0 0 20 20"><path d="M0 0l20 20M20 0L0 20" stroke="#888" stroke-width="2"/></svg></button></header>
  <div class="dbody">
    <label class="chk"><input type="checkbox" checked>开启控件显示增强</label>
    <p>提示：开启后，将增加更多控件样式设置，便于您自定义控件的交互视觉风格。</p>
    <div class="dbtns"><button>确定</button><button>取消</button></div>
  </div>
</section>

<div class="hl hl1"></div>
<div class="hl hl2"></div>
<b class="num n1">1</b>
<b class="num n2">2</b>
<b class="num n3">3</b>
</body>
</html>
```
FILE: styles.css
```css
* { box-sizing: border-box; margin: 0; padding: 0; }
body {
  font: 24px/30px "Liberation Sans", "Noto Sans CJK SC", sans-serif;
  color: #000; background: #f4f5f7; height: 100vh; overflow: hidden;
}
button { font: inherit; color: inherit; background: none; border: 0; white-space: nowrap; }
ul { list-style: none; }
i { font-style: normal; }
h1, h2, h3 { font-weight: normal; font-size: 24px; }
.sprite { position: absolute; width: 0; height: 0; }
.m { font-family: "Liberation Mono", monospace; font-size: 20px; white-space: pre; }

.window {
  height: 100vh; display: flex; flex-direction: column;
  border: 2px solid #a3a5a8; border-width: 2px 2px 0;
}
.titlebar { height: 60px; background: #fff; display: flex; align-items: center; padding-left: 16px; flex: none; }
.i32 { width: 32px; height: 32px; }
.titlebar h1 { font: 25px/30px "Open Sans", "Noto Sans CJK SC", sans-serif; color: #999; margin-left: 4px; white-space: nowrap; }
.titlebar h1 span { margin-left: 22px; }
.winbtns { margin-left: auto; display: flex; }
.winbtns button { width: 92px; height: 60px; }
.winbtns svg { width: 20px; height: 20px; fill: none; stroke: #888; stroke-width: 2; }

.menubar { height: 48px; flex: none; display: flex; align-items: center; background: #e0e0e2; padding-left: 49px; }
.menus { display: flex; gap: 58px; flex: 1; }
.log { white-space: nowrap; margin-right: 8px; }
.tool { width: 46px; height: 48px; display: flex; align-items: center; justify-content: center; }
.user { width: 208px; height: 48px; background: #b7dcf2; }

.main { flex: 1; min-height: 0; display: flex; }

/* left: file tree and data sets */
.left { width: 522px; flex: none; background: #f5f5f7; overflow: hidden; }
.ltools { height: 48px; border-bottom: 2px solid #dcdcde; display: flex; align-items: center; gap: 24px; padding-left: 15px; }
.tree li { height: 36px; display: flex; align-items: center; padding-left: 12px; white-space: nowrap; }
.tree .arr { width: 8px; height: 14px; margin-right: 22px; }
.tree .ic { width: 28px; height: 28px; margin-right: 8px; }
.tree .sel { background: #419bf9; color: #fff; line-height: 36px; width: 200px; }
.tree span { padding-left: 2px; }
.split { height: 20px; background: #e8e8e8; padding-left: 34px; display: flex; align-items: center; }
.dtools { height: 46px; border-bottom: 2px solid #dcdcde; display: flex; align-items: center; gap: 10px; padding-left: 18px; }
.half { opacity: 0.600; }
.sep { width: 2px; height: 32px; background: #d8d8da; margin: 0 6px; flex: none; }
.dshead { height: 50px; line-height: 50px; padding-left: 70px; background: #f0f0f2; margin-bottom: 14px; }

/* center column */
.center { flex: 1; min-width: 0; display: flex; flex-direction: column; border-left: 20px solid #e8e8e8; background: #f4f5f7; }
.top { display: flex; height: 106px; flex: none; }
.preview { width: 103px; display: flex; flex-direction: column; align-items: center; padding-top: 12px; gap: 12px; }
.dim { opacity: 0.400; }
.vsep { width: 2px; background: #d8d8da; margin: 10px 0; }
.tops { flex: 1; display: flex; flex-direction: column; }
.bar1 { height: 50px; display: flex; align-items: center; padding-left: 10px; }
.bar1 button { width: 54px; height: 46px; display: flex; align-items: center; justify-content: center; }
.bar1 .theme { width: auto; padding: 0 14px 0 12px; gap: 7px; }
.alert { width: 28px; height: 28px; border-radius: 50%; background: #ff2a00; color: #fff; font-size: 18px; line-height: 28px; }
.tabs { height: 56px; background: #e0e0e2; margin-left: 15px; display: flex; }
.newtab { width: 53px; border-right: 2px solid #c8c8ca; display: flex; align-items: center; justify-content: center; }
.tab { width: 480px; background: #f4f5f7; border-right: 2px solid #c8c8ca; border-top: 2px solid #d8d8da; display: flex; align-items: center; padding: 0 14px 0 11px; gap: 12px; color: #333; }
.tab button { margin-left: auto; display: flex; }
.more { margin-left: auto; width: 68px; }

.bar2 { height: 52px; flex: none; display: flex; align-items: center; gap: 8px; padding-left: 9px; }
.bar2 .sep { margin: 0 1px; }
.bar2 button { width: 44px; height: 40px; display: flex; align-items: center; justify-content: center; }
.bar2 .wide { width: 72px; gap: 12px; }
.bar2 .float { width: 60px; gap: 4px; }
.group { display: flex; }
.group button + button { margin-left: 1px; }
.bar2 .on { background: #419bf9; color: #fff; }
.combo { display: grid; border: 2px solid #d8d8da; height: 40px; background: #fff; }
.combo > * { grid-area: 1 / 1; }
.combo select { appearance: none; border: 0; background: none; font-size: 24px; font-family: inherit; padding: 0 40px 0 10px; width: 100%; color: #000; }
.combo select.m { font-family: "Liberation Mono", monospace; font-size: 20px; padding-left: 9px; }
.combo > span { width: 39px; justify-self: end; background: #dadbde; display: flex; align-items: center; justify-content: center; pointer-events: none; }
.font { width: 289px; }
.size { width: 110px; }
.bold { font-weight: bold; }
.bar2 .ital { font: italic bold 26px "Liberation Serif", serif; color: #333; }
.bar2 .undl { font: bold 24px "Liberation Sans", sans-serif; text-decoration: underline; text-underline-offset: 4px; color: #333; }
.fc b { border-bottom: 8px solid #000; width: 32px; line-height: 24px; color: #333; }
.bar2 .ab { font: bold 22px "Open Sans", sans-serif; color: #444; }
.bar2 .fx { font: 26px "Liberation Serif", serif; }
.fx small { font-size: 20px; }

/* parameter pane */
.parampane { flex: none; display: grid; grid-template: 36px 150px / 59px 1fr; border-bottom: 20px solid #d9d9db; }
.corner { background: #ababab; border: 2px solid #8c8c8c; border-width: 0 2px 2px 0; }
.hruler {
  display: flex; border-bottom: 4px solid #8e8e8e; overflow: hidden;
  background:
    linear-gradient(90deg, #8f8f8f 2px, transparent 2px) 0 0 / 200px 32px repeat-x,
    linear-gradient(90deg, #999 2px, transparent 2px) 0 10px / 100px 22px repeat-x,
    linear-gradient(90deg, #999 2px, transparent 2px) 0 22px / 20px 10px repeat-x #b2b2b2;
}
.hruler span { flex: 0 0 200px; padding-left: 6px; font: 17px/26px "Open Sans", sans-serif; color: #333; }
.vruler {
  display: flex; align-items: flex-start; padding-left: 30px;
  background:
    linear-gradient(#999 2px, transparent 2px) 100% 98px / 16px 100px repeat-y,
    linear-gradient(#999 2px, transparent 2px) 100% 18px / 8px 20px repeat-y #ababab;
}
.vruler span { writing-mode: vertical-rl; font: 17px/17px "Open Sans", sans-serif; color: #333; }
.canvas { position: relative; background: #b2b2b2; border: 2px solid #939393; border-width: 0 0 2px 2px; }
.w { position: absolute; }
.area { left: 0; top: 18px; width: 162px; height: 46px; border: 2px solid #969696; border-left: 0; text-align: right; line-height: 44px; white-space: nowrap; }
.areabox { left: 160px; top: 18px; width: 240px; height: 46px; border: 2px solid #969696; background: linear-gradient(#123f6b, #123f6b) 4px 8px / 6px 26px no-repeat; }
.drop { left: 398px; top: 18px; width: 42px; height: 46px; border: 2px solid #666; border-radius: 5px; display: flex; align-items: center; justify-content: center; }
.query, .export { background: linear-gradient(#adadad, #8e8e8e); border: 2px solid #666; }
.query { left: 160px; top: 84px; width: 280px; height: 46px; }
.export { left: 571px; top: 22px; width: 161px; height: 42px; }
.eye { left: 813px; top: 24px; width: 64px; height: 60px; }
.pencil { left: 915px; top: 24px; width: 60px; height: 60px; }

/* report sheet */
.sheetarea { flex: 1; min-height: 0; display: flex; }
.sheet { flex: 1; min-width: 0; overflow: hidden; position: relative; background: #fff; }
table { table-layout: fixed; border-collapse: separate; border-spacing: 0; width: 1922px; }
col { width: 144px; }
col.rh { width: 50px; }
tr { height: 38px; }
thead tr { height: 40px; }
.tall { height: 78px; }
th { font: 20px/24px "Liberation Mono", monospace; border: 2px solid #d8d8dc; border-width: 0 2px 2px 0; background: #fff; padding: 2px 2px 0 0; }
thead th { border-bottom-color: #c0c0c0; padding-top: 8px; }
tbody th { border-right-color: #c0c0c0; }
.cn { background: #f4f5f7; border-right: 2px solid #d8d8dc; border-bottom: 2px solid #d8d8dc; }
th.cy { background: #cff0fb; }
th.gr { background: #e8e8e8; }
td { text-align: center; vertical-align: middle; }
.g { border-bottom: 2px solid #c0c0c0; background: repeating-linear-gradient(90deg, transparent 0 142px, #c0c0c0 142px 144px); }
.kb { border-bottom-color: #000; }
.k { border: 2px solid #000; border-width: 0 2px 2px 0; position: relative; white-space: nowrap; }
.k.m { font-family: "Liberation Mono", monospace; }
.first { box-shadow: -2px 0 #000; }
.selcell { position: relative; z-index: 1; background: #ecf5fd; outline: 4px solid #3385f0; outline-offset: -2px; font-weight: bold; font-size: 42px; line-height: 60px; color: #7a828b; padding-top: 6px; }
.selcell i { position: absolute; right: -6px; bottom: -6px; width: 12px; height: 12px; background: #3385f0; border: 1px solid #fff; }
.diag { display: block; font-size: 18px; }
.mid { fill: #666; }
.mark { position: absolute; left: 1px; top: 1px; width: 12px; height: 10px; }
.clip { height: 36px; line-height: 28px; padding-top: 3px; overflow: hidden; white-space: normal; }
.flag { background: linear-gradient(45deg, #ffc400 8px, transparent 8px); }
.chart svg { display: block; }
.ax { font: 25px "DejaVu Sans", "Noto Sans CJK SC", sans-serif; fill: #666; }
.lg { font: 28px "DejaVu Sans", "Noto Sans CJK SC", sans-serif; fill: #666; }
.pagebreak { position: absolute; left: 1344px; top: 40px; bottom: 0; width: 2px; background: repeating-linear-gradient(#000 0 16px, #c0c0c0 16px 24px, #000 24px 28px, #c0c0c0 28px 36px); }

.vscroll { width: 34px; display: flex; flex-direction: column; padding: 2px; }
.vscroll button, .hscroll button { background: #fff; flex: none; display: flex; align-items: center; justify-content: center; }
.vscroll button { height: 32px; }
.vscroll .thumb { flex: 1; background: #e1e1e1; margin-bottom: 42px; }
.flip, .flop { transform: rotate(180deg); }
.hscroll { height: 32px; flex: none; display: flex; }
.hscroll button { width: 33px; }
.hscroll .thumb { flex: 1; background: #e1e1e1; margin: 0 145px 2px 1px; }
.sheetbar { height: 30px; flex: none; display: flex; overflow: hidden; align-items: flex-start; }
.stab { width: 134px; height: 34px; background: #fff; color: #555; display: flex; align-items: center; gap: 9px; padding-left: 16px; margin-right: 24px; }
.add { width: 60px; text-align: left; display: flex; }
.zoom { margin-left: auto; height: 40px; display: flex; align-items: center; }
.zoom button { width: 48px; display: flex; justify-content: center; }
.zoom .minus { width: 50px; }
.zoom .plus { width: 64px; }
.zoom input[type=range] { appearance: none; width: 428px; height: 24px; background: linear-gradient(#d8d8d8, #d8d8d8) 0 11px / 100% 2px no-repeat; }
.zoom input[type=range]::-webkit-slider-thumb { appearance: none; width: 8px; height: 24px; border-radius: 4px; background: #333; }
.pct { width: 68px; height: 42px; border: 2px solid #d8d8da; background: #fff; font: 24px "Liberation Sans", sans-serif; padding: 0 8px; margin-right: 8px; }
.zoom .m { width: 22px; }

/* right side */
.rail { width: 80px; flex: none; background: #e8e8e8; display: flex; flex-direction: column; align-items: center; gap: 8px; padding-top: 6px; }
.rail button { width: 64px; height: 56px; display: flex; align-items: center; justify-content: center; flex: none; }
.rail button:first-child { height: 44px; padding-top: 12px; }
.rail .cur { background: #f4f5f7; }
.right { width: 492px; flex: none; background: #f4f5f7; }
.right header { height: 54px; border-bottom: 2px solid #d8d8da; display: flex; align-items: center; justify-content: space-between; padding: 0 12px 0 20px; }
.pick { display: flex; align-items: center; padding: 24px 30px 0 20px; gap: 34px; }
.pick .combo { flex: 1; }

/* template menu */
.popup {
  position: absolute; left: 152px; top: 110px; width: 422px; padding: 12px 0 17px;
  background: #e0e0e2; border: 2px solid #c9c9cc; border-top: 0; border-radius: 0 0 8px 8px; box-shadow: 5px 0 #ececee;
}
.popup h3 { height: 40px; line-height: 40px; padding: 0 26px 0 10px; display: flex; align-items: center; color: #333; white-space: nowrap; }
.popup h3::after { content: ""; flex: 1; height: 2px; background: #333; margin: 8px 0 0 8px; }
.popup button { height: 42px; width: 100%; display: flex; align-items: center; padding-left: 18px; }
.popup svg { width: 32px; height: 32px; margin-right: 19px; flex: none; }
.popup hr { border: 0; border-top: 2px dashed #999; margin: 9px 26px 4px 62px; }
kbd { font: 20px "Liberation Sans", sans-serif; margin: 0 50px 0 auto; }

/* dialog */
.dialog { position: absolute; left: 1247px; top: 670px; width: 677px; border: 5px solid #ff4444; background: #f4f5f7; box-shadow: 0 -4px 0 -1px #fff, 0 -4px 0 0 #999, 0 4px 16px rgba(0, 0, 0, 0.400); }
.dialog header { height: 43px; background: #fff; display: flex; align-items: center; justify-content: space-between; padding: 0 22px 6px 6px; color: #999; }
.x { display: flex; }
.dbody { padding: 72px 27px 6px 17px; }
.chk { display: flex; align-items: center; gap: 7px; padding-left: 9px; }
.chk input { appearance: none; width: 26px; height: 26px; background: #3593f0; position: relative; }
.chk input::after { content: ""; position: absolute; left: 9px; top: 3px; width: 8px; height: 16px; border: solid #fff; border-width: 0 3px 3px 0; transform: rotate(40deg); }
.dbody p { color: #777; margin: 24px 0 68px; padding-right: 20px; }
.dbtns { display: flex; justify-content: flex-end; gap: 20px; }
.dbtns button { width: 88px; height: 40px; background: #fff; border: 2px solid #d8d8da; }

/* callouts */
.hl { position: absolute; border: 5px solid #ff4444; }
.hl1 { left: 148px; top: 67px; width: 89px; height: 44px; }
.hl2 { left: 154px; top: 155px; width: 420px; height: 53px; }
.num { position: absolute; width: 40px; height: 40px; border-radius: 50%; background: #ff4444; color: #fff; font-weight: normal; font-size: 28px; line-height: 40px; text-align: center; }
.n1 { left: 105px; top: 60px; }
.n2 { left: 107px; top: 162px; }
.n3 { left: 1198px; top: 668px; }
```
